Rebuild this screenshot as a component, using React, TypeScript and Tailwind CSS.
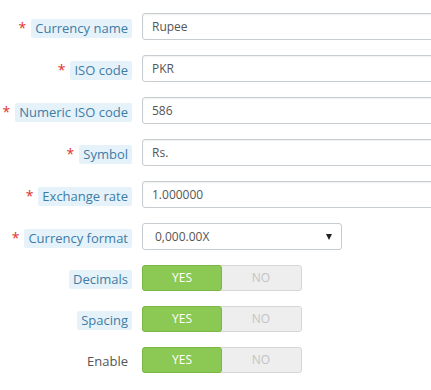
import React from "react";

const font = { fontFamily: '"Open Sans", "Liberation Sans", sans-serif' };

function Label({ text, required, help = true }: { text: string; required?: boolean; help?: boolean }) {
  return (
    <div className="w-[132px] shrink-0 flex items-center justify-end pt-[3px]">
      {required && <span className="text-[#e0322c] text-[14px] mr-[5px] leading-none">*</span>}
      {help ? (
        <span className="bg-[#e5f2f9] text-[#3f7ca6] text-[13px] leading-[19px] px-[4px] rounded-[2px]">{text}</span>
      ) : (
        <span className="text-[#555] text-[13px] leading-[19px] px-[4px]">{text}</span>
      )}
    </div>
  );
}

function TextRow({ label, value }: { label: string; value: string }) {
  return (
    <div className="flex items-center h-[27px]">
      <Label text={label} required />
      <div className="ml-[10px] w-[320px] shrink-0 h-[27px] border border-[#c7ccd0] rounded-[3px] bg-white flex items-center pl-[9px] text-[12px] text-[#555] shadow-[inset_0_1px_2px_rgba(0,0,0,0.06)]">
        {value}
      </div>
    </div>
  );
}

function SwitchRow({ label, help = true }: { label: string; help?: boolean }) {
  return (
    <div className="flex items-center h-[26px]">
      <Label text={label} help={help} />
      <div className="ml-[10px] flex w-[160px] h-[26px] rounded-[3px] bg-[#eeeeee] border border-[#d6d6d6] text-[12px]">
        <span className="w-[80px] -m-px h-[26px] flex items-center justify-center bg-[#8bc954] border border-[#7ab845] rounded-[3px] text-white">
          YES
        </span>
        <span className="flex-1 flex items-center justify-center text-[#c4c4c4]">NO</span>
      </div>
    </div>
  );
}

export default function App() {
  return (
    <div className="w-[431px] h-[390px] overflow-hidden bg-white pt-[13px]" style={font}>
      <div className="flex flex-col gap-[15px]">
        <TextRow label="Currency name" value="Rupee" />
        <TextRow label="ISO code" value="PKR" />
        <TextRow label="Numeric ISO code" value="586" />
        <TextRow label="Symbol" value="Rs." />
        <TextRow label="Exchange rate" value="1.000000" />
        <div className="flex items-center h-[27px]">
          <Label text="Currency format" required />
          <div className="ml-[10px] w-[200px] h-[27px] border border-[#c7ccd0] rounded-[3px] bg-white flex items-center justify-between pl-[12px] pr-[9px] text-[12px] text-[#555]">
            <span>0,000.00X</span>
            <svg width="6" height="6" viewBox="0 0 6 6">
              <path d="M0 0 H6 L3 6 Z" fill="#222" />
            </svg>
          </div>
        </div>
        <SwitchRow label="Decimals" />
        <SwitchRow label="Spacing" />
        <SwitchRow label="Enable" help={false} />
      </div>
    </div>
  );
}
